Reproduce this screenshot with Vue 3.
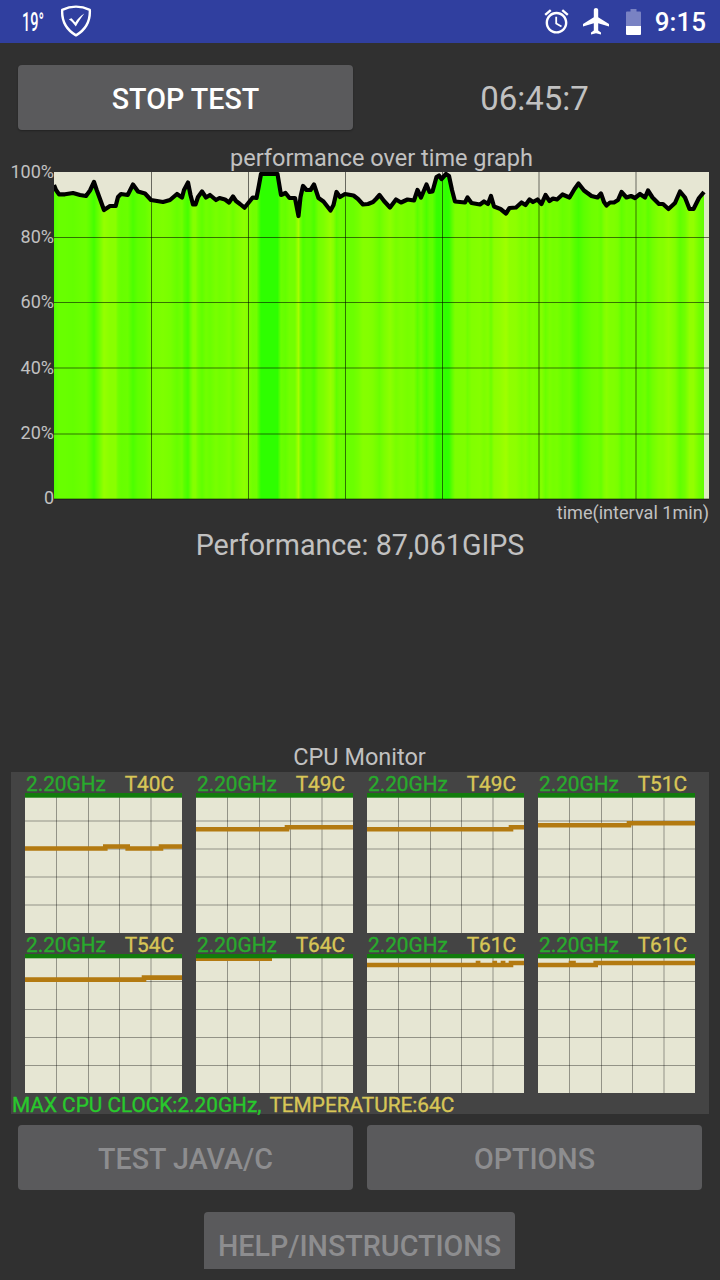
<template>
  <div class="screen">
    <header class="status-bar">
      <span class="outside-temp">19°</span>
      <svg class="shield" width="32" height="32" viewBox="0 0 32 32">
        <path d="M16 1.6C11.5 1.6 6 3 2.2 4.8C1.6 15 4.5 23.5 16 30.4C27.5 23.5 30.4 15 29.8 4.8C26 3 20.5 1.6 16 1.6Z" fill="none" stroke="#fff" stroke-width="2.4" stroke-linejoin="round" />
        <path d="M8.8 14.2L11.6 13.2L15.3 17.6C17.4 14 20.2 11 24.3 8.4C21 12.8 18.3 16.8 15.8 21.6C13.8 18.6 11.6 16 8.8 14.2Z" fill="#fff" />
      </svg>
      <div class="status-right">
        <svg class="alarm" width="29" height="29" viewBox="0 0 24 24" fill="#fff">
          <path d="M22 5.72l-4.6-3.86-1.29 1.53 4.6 3.86L22 5.72zM7.88 3.39L6.6 1.86 2 5.71l1.29 1.53 4.59-3.85zM12.5 8H11v6l4.75 2.85.75-1.23-4-2.37V8zM12 4c-4.97 0-9 4.03-9 9s4.02 9 9 9c4.97 0 9-4.03 9-9s-4.03-9-9-9zm0 16c-3.87 0-7-3.13-7-7s3.13-7 7-7 7 3.13 7 7-3.13 7-7 7z" />
        </svg>
        <svg class="plane" width="26" height="27" viewBox="0 0 26 27" fill="#fff">
          <path d="M26 18.6V15.9L15.2 9.3V2.1C15.2 0.9 14.2 0 13 0S10.8 0.9 10.8 2.1V9.3L0 15.9V18.6L10.8 15.3V22.4L8 24.4V26.6L13 25.2L18 26.6V24.4L15.2 22.4V15.3Z" />
        </svg>
        <svg class="battery" width="15" height="26" viewBox="0 0 15 26">
          <path d="M4.5 0H10.5V2.5H14Q15 2.5 15 3.5V17H0V3.5Q0 2.5 1 2.5H4.5Z" fill="#7982c3" />
          <path d="M0 17H15V25Q15 26 14 26H1Q0 26 0 25Z" fill="#fff" />
        </svg>
        <span class="clock">9:15</span>
      </div>
    </header>

    <section class="controls">
      <button class="btn">STOP TEST</button>
      <span class="timer">06:45:7</span>
    </section>

    <h2 class="graph-title"><span>performance over time graph</span></h2>
    <svg class="graph" width="720" height="340" viewBox="0 162 720 340">
      <defs>
        <linearGradient id="load" gradientUnits="userSpaceOnUse" x1="54" y1="0" x2="704" y2="0">
          <stop v-for="s in stops" :key="s.offset" :offset="s.offset" :stop-color="s.color" />
        </linearGradient>
        <clipPath id="plot"><rect x="54" y="172" width="655" height="328" /></clipPath>
      </defs>
      <rect x="54" y="172" width="655" height="327" fill="#e6e6d3" />
      <polygon :points="area" fill="url(#load)" />
      <rect x="704" y="195" width="5" height="304" fill="#deebc3" />
      <g stroke="#000" stroke-opacity="0.55">
        <line v-for="x in gridX" :key="x" :x1="x" y1="172" :x2="x" y2="499" />
        <line v-for="y in gridY" :key="y" x1="54" :y1="y" x2="709" :y2="y" />
      </g>
      <polyline :points="line" fill="none" stroke="#000" stroke-width="4.2" stroke-linejoin="round" clip-path="url(#plot)" />
      <text v-for="l in labels" :key="l.text" x="54" :y="l.y" class="axis">{{ l.text }}</text>
    </svg>
    <p class="interval">time(interval 1min)</p>
    <p class="performance"><span>Performance: 87,061GIPS</span></p>

    <h2 class="monitor-title"><span>CPU Monitor</span></h2>
    <section class="monitor">
      <div class="cores">
        <div v-for="(core, i) in cores" :key="i" class="core">
          <div class="core-head">
            <span class="freq">2.20GHz</span>
            <span class="temp">T{{ core.temp }}C</span>
          </div>
          <svg width="157" :height="i < 4 ? 140 : 139">
            <rect width="157" height="140" fill="#e6e6d3" />
            <g stroke="#000" stroke-opacity="0.36">
              <line v-for="x in [31.5, 63.5, 94.5, 126]" :key="x" :x1="x" y1="0" :x2="x" y2="140" />
              <line v-for="n in 4" :key="n" x1="0" :y1="n * 28 - (i < 4 ? 0 : 0.5)" x2="157" :y2="n * 28 - (i < 4 ? 0 : 0.5)" />
            </g>
            <path :d="core.path" fill="none" stroke="#b37a11" stroke-width="4.6" />
            <rect width="157" :height="i < 4 ? 4.7 : 4.3" fill="#127b0c" />
          </svg>
        </div>
      </div>
      <p class="summary"><span class="max-clock">MAX CPU CLOCK:2.20GHz,</span><span class="max-temp">TEMPERATURE:64C</span></p>
    </section>

    <section class="actions">
      <button class="btn" disabled>TEST JAVA/C</button>
      <button class="btn" disabled>OPTIONS</button>
    </section>
    <button class="btn help" disabled>HELP/INSTRUCTIONS</button>
  </div>
</template>

<script setup>
const samples = [
  [54, 185], [56, 190], [59, 194.3], [65, 194.3], [73, 193], [80, 195], [86, 196], [90, 190.5], [94, 182], [96.7, 190],
  [100, 199], [104, 210], [110, 206], [115.7, 206], [118, 197], [121, 194], [127.7, 195], [133, 184.5], [138, 191.5], [145, 193.5],
  [151, 200], [163, 202], [170, 200], [177, 194], [182, 197.5], [184, 190], [188, 182.5], [190.5, 195], [193, 204.5], [195.5, 204.5],
  [198, 197], [202, 191.5], [206, 197.5], [210, 195], [216, 200], [219.5, 198], [225, 199.5], [229, 202.5], [233, 196.5], [236, 201],
  [240, 204], [244.5, 207.7], [252.7, 197.5], [256.5, 198], [259, 185], [261, 174], [277.5, 174], [281, 195], [285.5, 193], [289.5, 198],
  [295, 198], [298.5, 216], [300.5, 197], [303, 186], [306.5, 190], [310.5, 190], [314, 184.5], [318.5, 198], [323.5, 201.5], [330.5, 210.5],
  [333.5, 205], [336.5, 192], [340, 197], [345, 194], [353.5, 195.5], [358, 199], [363, 204.5], [368, 204], [373, 202], [376, 199],
  [379.5, 195], [384, 201], [390, 207.5], [396, 199.5], [401, 202.5], [407.5, 199.5], [414, 200.5], [417.5, 190], [421, 197.5], [426.5, 184.5],
  [429.5, 192], [432.5, 191.5], [436.5, 177], [439, 175.5], [441.5, 179], [446, 174], [449, 176], [452, 190], [455, 201.5], [465, 202.5],
  [467.5, 197.5], [471.5, 203], [480, 204.5], [484, 201.5], [488, 204], [491, 196], [494, 206.5], [500.5, 209], [506, 213.5], [509.5, 208],
  [516, 207.5], [521.5, 202.5], [525.5, 205], [529.5, 199.5], [533, 202], [537.5, 199.5], [541.5, 204], [545.5, 195], [549.5, 201], [553, 198.5],
  [557, 199.5], [562.5, 194.5], [569.5, 197.5], [574.5, 189], [578.5, 183.5], [584, 190.5], [591.5, 196], [597.5, 197.5], [601, 193.5], [604, 202],
  [606.5, 205.5], [610, 202.5], [614, 202.5], [618, 200], [621.5, 192], [626.5, 197.5], [631, 196], [635, 198], [640, 194], [645, 197.5],
  [648, 190.5], [652.5, 197.5], [659, 204], [663, 204], [668.5, 209], [675, 203], [680, 191.5], [685, 197.5], [689.5, 209], [693.5, 209],
  [699, 198], [704, 192]
]

const line = samples.map(p => p.join(',')).join(' ')
const area = `54,499 ${line} 704,499`

// lower performance shifts the fill from green towards yellow
const stops = samples.map(([x, y]) => ({
  offset: (x - 54) / 650,
  color: `rgb(${Math.round(46 + (y - 174) * 2.85)}, 255, 0)`
}))

const gridX = [151.5, 248.5, 345.5, 442.5, 539, 636]
const gridY = [237.5, 302.5, 368, 434, 499]
const labels = [
  { text: '100%', y: 178 },
  { text: '80%', y: 243 },
  { text: '60%', y: 308 },
  { text: '40%', y: 373.5 },
  { text: '20%', y: 439 },
  { text: '0', y: 504 }
]

const cores = [
  { temp: 40, path: 'M0 55.5H80.3V53.5H102.7V55.5H136V53.5H157' },
  { temp: 49, path: 'M0 36.3H91V34.3H157' },
  { temp: 49, path: 'M0 36.3H144V34.3H157' },
  { temp: 51, path: 'M0 32.3H91V30.3H157' },
  { temp: 54, path: 'M0 25.6H119V23.6H157' },
  { temp: 64, path: 'M0 4.7H76' },
  { temp: 61, path: 'M0 11H111V9H111.1V11H127.7V9H127.8V11H136V9H136.1V11H144V9H157' },
  { temp: 61, path: 'M0 11H33V9H35.5V11H57.7V9H157' }
]
</script>

<style>
body {
  background: #303030;
}
</style>

<style scoped>
.screen {
  width: 720px;
  height: 1280px;
  overflow: hidden;
  display: flex;
  flex-direction: column;
  background: #303030;
  color: #c1c1c1;
  font-family: Roboto, "Liberation Sans", sans-serif;
}
.status-bar {
  flex: none;
  display: flex;
  align-items: center;
  height: 43px;
  padding: 0 14px 0 22px;
  background: #303f9f;
  color: #fff;
}
.outside-temp {
  width: 38px;
  font-size: 25px;
  font-weight: 500;
  line-height: 43px;
  padding-top: 1px;
  transform: scaleX(0.58);
  transform-origin: left;
}
.shield {
  margin-top: -1px;
}
.status-right {
  display: flex;
  align-items: center;
  margin-left: auto;
}
.plane {
  margin: 0 17px 0 12px;
}
.clock {
  margin-left: 14px;
  padding-top: 2px;
  font-size: 26px;
  font-weight: 500;
  line-height: 41px;
}
.controls {
  flex: none;
  display: flex;
  height: 65px;
  padding: 22px 0 0 18px;
}
.btn {
  flex: none;
  width: 335px;
  height: 65px;
  padding: 3px 0 0;
  border: 0;
  border-radius: 4px;
  background: #5a5a5c;
  box-shadow: 0 1px 2px rgba(0, 0, 0, 0.3);
  color: #fff;
  font: 500 28.7px/62px Roboto, sans-serif;
  text-align: center;
  white-space: nowrap;
}
.btn:disabled {
  color: #8d8d8f;
  box-shadow: none;
}
.timer {
  width: 363px;
  font-size: 33px;
  line-height: 68px;
  text-align: center;
}
h2, p {
  flex: none;
  margin: 0;
  font-weight: 400;
}
.graph-title {
  height: 32px;
  padding: 0 0 0 43px;
  font-size: 23.5px;
  line-height: 56px;
  text-align: center;
}
.graph {
  flex: none;
  display: block;
  overflow: visible;
}
.axis {
  fill: #c1c1c1;
  font-size: 18px;
  text-anchor: end;
}
.interval {
  height: 22px;
  padding-right: 11px;
  font-size: 18.1px;
  line-height: 22px;
  text-align: right;
}
.performance {
  height: 220px;
  font-size: 28.7px;
  line-height: 42px;
  text-align: center;
}
.monitor-title {
  height: 28px;
  padding-right: 1px;
  font-size: 23.5px;
  line-height: 27px;
  text-align: center;
}
.monitor {
  flex: none;
  width: 698px;
  height: 342px;
  margin-left: 11px;
  background: #444;
}
.cores {
  display: grid;
  grid-template-columns: repeat(4, 157px);
  column-gap: 14px;
  padding-left: 14px;
}
.core svg {
  display: block;
}
.core-head {
  display: flex;
  justify-content: space-between;
  height: 21px;
  padding: 0 8px 0 1px;
  font-size: 20.8px;
  line-height: 24px;
  -webkit-text-stroke: 0.35px;
}
.freq {
  color: #28ab2c;
}
.temp {
  color: #d8c657;
}
.summary {
  display: flex;
  gap: 8px;
  height: 21px;
  padding-left: 1px;
  font-size: 20.8px;
  line-height: 24px;
  -webkit-text-stroke: 0.35px;
}
.max-clock {
  color: #28c92c;
}
.max-temp {
  color: #d8c657;
}
.actions {
  flex: none;
  display: flex;
  gap: 14px;
  padding: 11px 18px 22px;
}
.help {
  width: 311px;
  height: 57px;
  margin-left: 204px;
  border-radius: 4px 4px 0 0;
}
</style>
